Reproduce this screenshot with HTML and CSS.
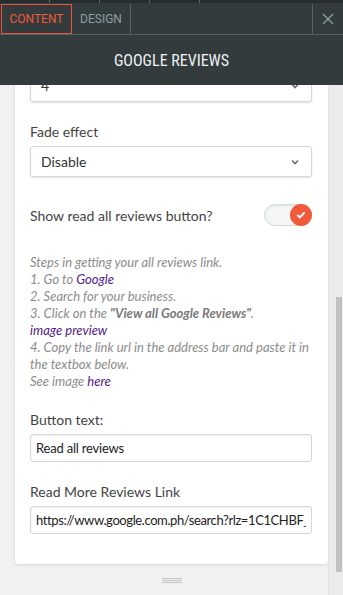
FILE: index.html
```html
<!DOCTYPE html>
<html lang="en">
<head>
    <meta charset="UTF-8">
    <meta name="viewport" content="width=device-width, initial-scale=1.0">
    <title>Google Reviews Settings</title>
    <link rel="stylesheet" href="styles.css">
</head>
<body>
    <div class="panel">
        <div class="toolbar-strip">
            <span></span><span></span><span></span><span></span>
        </div>

        <div class="head">
            <div class="tabs">
                <div class="tab active">CONTENT</div>
                <div class="tab">DESIGN</div>
                <div class="tab-fill"></div>
                <div class="tab-close">
                    <svg width="12" height="12" viewBox="0 0 12 12">
                        <path d="M1 1 L11 11 M11 1 L1 11" stroke="#8fa1a5" stroke-width="1.3" fill="none"/>
                    </svg>
                </div>
            </div>
            <h1>GOOGLE REVIEWS</h1>
        </div>

        <div class="body">
            <div class="scroller">
                <div class="card">
                    <div class="select first">
                        <span>4</span>
                        <svg class="chev" width="8" height="6" viewBox="0 0 8 6"><path d="M1 1.5 L4 4.5 L7 1.5" stroke="#6a7275" stroke-width="1.6" fill="none"/></svg>
                    </div>

                    <label class="field-label">Fade effect</label>
                    <div class="select">
                        <span>Disable</span>
                        <svg class="chev" width="8" height="6" viewBox="0 0 8 6"><path d="M1 1.5 L4 4.5 L7 1.5" stroke="#6a7275" stroke-width="1.6" fill="none"/></svg>
                    </div>

                    <div class="toggle-row">
                        <span>Show read all reviews button?</span>
                        <div class="toggle">
                            <div class="knob">
                                <svg width="10" height="8" viewBox="0 0 10 8"><path d="M1.3 4 L3.8 6.4 L8.7 1.4" stroke="#fff" stroke-width="2" fill="none"/></svg>
                            </div>
                        </div>
                    </div>

                    <p class="help">
                        Steps in getting your all reviews link.<br>
                        1. Go to <a href="#">Google</a><br>
                        2. Search for your business.<br>
                        3. Click on the <b>"View all Google Reviews"</b>.<br>
                        <a href="#">image preview</a><br>
                        4. Copy the link url in the address bar and paste it in the textbox below.<br>
                        See image <a href="#">here</a>
                    </p>

                    <label class="field-label">Button text:</label>
                    <input class="text-input" type="text" value="Read all reviews">

                    <label class="field-label">Read More Reviews Link</label>
                    <input class="text-input url" type="text" value="https://www.google.com.ph/search?rlz=1C1CHBF_enPH">
                </div>

                <div class="grip"><span></span><span></span><span></span></div>
            </div>

            <div class="scrollbar"><div class="thumb"></div></div>
        </div>
    </div>
</body>
</html>
```

FILE: styles.css
```css
* {
    margin: 0;
    padding: 0;
    box-sizing: border-box;
}

body {
    font-family: 'Source Sans Pro', 'Lato', sans-serif;
    background: #f1f1f1;
    width: 343px;
    height: 595px;
    overflow: hidden;
}

.panel {
    height: 595px;
    display: flex;
    flex-direction: column;
}

.toolbar-strip {
    height: 3px;
    background: #272c2e;
    display: flex;
}

.toolbar-strip span {
    width: 50px;
    border-right: 1px solid #5d6669;
}

.head {
    background: #333b3d;
    height: 82px;
}

.tabs {
    display: flex;
    height: 32px;
    border-bottom: 1px solid #556064;
    padding-top: 1px;
}

.tab {
    font-family: Roboto, sans-serif;
    font-size: 12px;
    color: #8d9ea2;
    width: 59px;
    display: flex;
    align-items: center;
    justify-content: center;
    border-right: 1px solid #556064;
}

.tab.active {
    color: #f0583a;
    width: 71px;
    margin-left: 1px;
    border: 1px solid #e8553a;
}

.tab-fill {
    flex: 1;
    border-right: 1px solid #556064;
}

.tab-close {
    width: 30px;
    display: flex;
    align-items: center;
    justify-content: center;
}

h1 {
    font-family: 'Roboto Condensed', 'Liberation Sans Narrow', Roboto, sans-serif;
    font-weight: 400;
    font-size: 16px;
    color: #eef3f4;
    text-align: center;
    margin-top: 16px;
}

.body {
    flex: 1;
    position: relative;
    overflow: hidden;
}

.scroller {
    padding-left: 15px;
    padding-right: 15px;
    margin-top: -23px;
}

.card {
    background: #fff;
    border-radius: 0 0 4px 4px;
    box-shadow: 0 1px 3px rgba(0, 0, 0, 0.12);
    padding: 0 16px 30px 15px;
}

.select {
    height: 31px;
    border: 1px solid #d3d9db;
    border-radius: 3px;
    box-shadow: 0 1px 2px rgba(0, 0, 0, 0.12);
    display: flex;
    align-items: center;
    justify-content: space-between;
    padding: 0 12px 0 10px;
    font-size: 14px;
    color: #333;
}

.select.first {
    height: 40px;
    padding-top: 8px;
    border-top: none;
}

.field-label {
    display: block;
    font-size: 14px;
    color: #444;
    margin-top: 21px;
    margin-bottom: 6px;
}

.toggle-row {
    display: flex;
    align-items: center;
    justify-content: space-between;
    margin-top: 27px;
    font-size: 14px;
    color: #444;
}

.toggle {
    width: 48px;
    height: 22px;
    border-radius: 11px;
    background: #f4f5f5;
    border: 1px solid #d6dbdc;
    box-shadow: inset 0 1px 2px rgba(0, 0, 0, 0.08);
    display: flex;
    justify-content: flex-end;
    align-items: center;
}

.knob {
    width: 22px;
    height: 22px;
    border-radius: 50%;
    background: #f05a3b;
    margin-right: -1px;
    display: flex;
    align-items: center;
    justify-content: center;
}

.help {
    margin-top: 28px;
    font-size: 13px;
    font-style: italic;
    line-height: 17px;
    color: #8c8c8c;
}

.help a {
    color: #551a8b;
    text-decoration: none;
}

.help b {
    color: #7a7a7a;
}

.text-input {
    display: block;
    width: 100%;
    height: 28px;
    border: 1px solid #d3d9db;
    border-radius: 3px;
    box-shadow: inset 0 1px 2px rgba(0, 0, 0, 0.08);
    padding: 0 5px;
    font-family: inherit;
    font-size: 13px;
    letter-spacing: -0.2px;
    color: #222;
}

.text-input.url {
    letter-spacing: -0.4px;
}

.grip {
    display: flex;
    flex-direction: column;
    align-items: center;
    gap: 1px;
    margin-top: 14px;
}

.grip span {
    width: 20px;
    height: 1px;
    background: #c4c4c4;
}

.scrollbar {
    position: absolute;
    top: 0;
    right: 0;
    width: 15px;
    height: 100%;
    background: #ececec;
    border-left: 1px solid #e2e2e2;
}

.thumb {
    position: absolute;
    left: 7px;
    top: 212px;
    width: 6px;
    height: 275px;
    background: #c1c1c1;
}
```
